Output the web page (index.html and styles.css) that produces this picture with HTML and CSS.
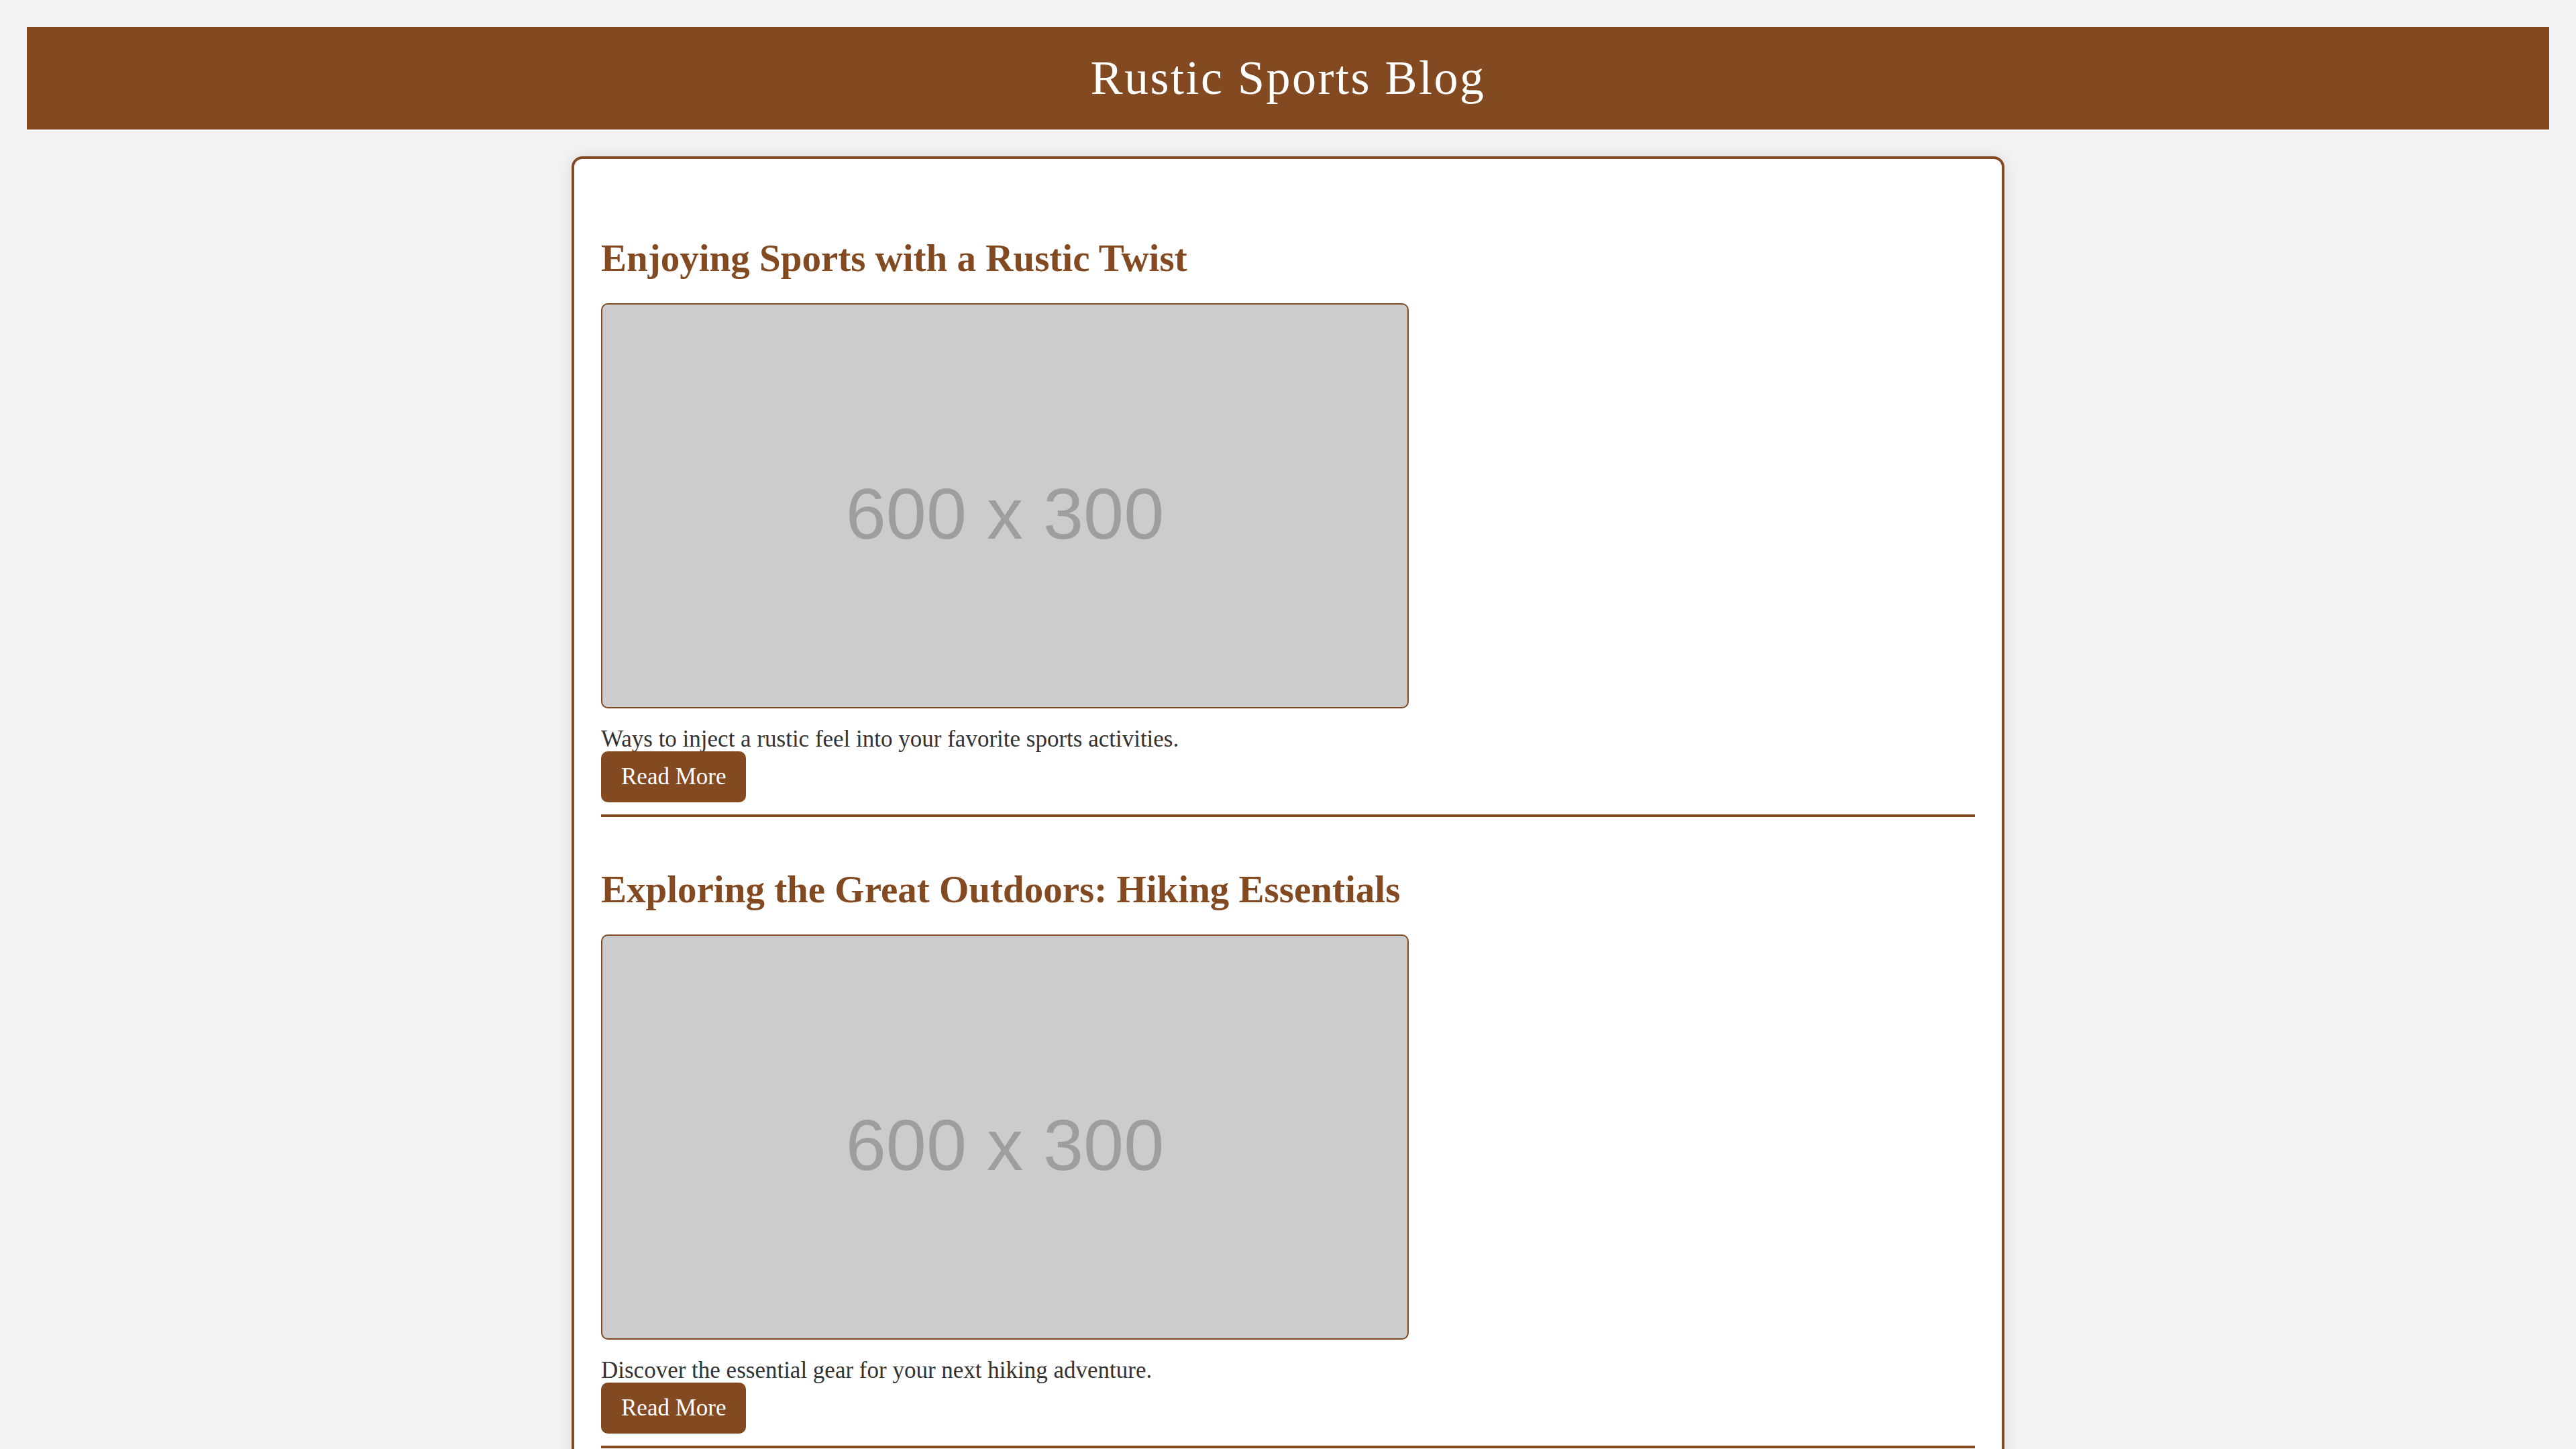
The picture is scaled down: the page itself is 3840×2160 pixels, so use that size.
FILE: index.html
```html
<!DOCTYPE html>
<html lang="en">
<head>
    <meta charset="UTF-8">
    <title>Rustic Sports Blog</title>
    <link rel="stylesheet" href="styles.css">
</head>
<body>
    <header class="site-header">
        <h1>Rustic Sports Blog</h1>
    </header>
    <main class="posts">
        <article class="post">
            <h2>Enjoying Sports with a Rustic Twist</h2>
            <div class="thumb">600 x 300</div>
            <p>Ways to inject a rustic feel into your favorite sports activities.</p>
            <a href="#" class="read-more">Read More</a>
        </article>
        <article class="post">
            <h2>Exploring the Great Outdoors: Hiking Essentials</h2>
            <div class="thumb">600 x 300</div>
            <p>Discover the essential gear for your next hiking adventure.</p>
            <a href="#" class="read-more">Read More</a>
        </article>
        <article class="post">
            <h2>Old School Training: Back to Basics</h2>
            <div class="thumb">600 x 300</div>
            <p>Simple workouts that need nothing more than a field and some grit.</p>
            <a href="#" class="read-more">Read More</a>
        </article>
    </main>
</body>
</html>
```

FILE: styles.css
```css
* {
    box-sizing: border-box;
}
body {
    margin: 0;
    padding: 40px;
    background: #f2f2f2;
    font-family: "Liberation Serif", "DejaVu Serif", serif;
    color: #333;
}
.site-header {
    background: #834921;
    color: #fff;
    text-align: center;
    padding: 40px;
}
.site-header h1 {
    margin: 0;
    font-size: 72px;
    line-height: 73px;
    font-weight: normal;
    letter-spacing: 2.5px;
}
.posts {
    width: 2136px;
    margin: 40px auto 0;
    padding: 40px;
    background: #fff;
    border: 4px solid #834921;
    border-radius: 16px;
    box-shadow: 0 0 20px rgba(0, 0, 0, 0.1);
}
.post {
    padding: 40px 0 18px;
    border-bottom: 4px solid #834921;
}
.post h2 {
    margin: 40px 0 40px;
    font-size: 57px;
    line-height: 55px;
    color: #834921;
}
.thumb {
    width: 1204px;
    height: 604px;
    display: flex;
    align-items: center;
    justify-content: center;
    padding-top: 22px;
    background: #ccc;
    border: 2px solid #834921;
    border-radius: 10px;
    font-family: "Liberation Sans", Arial, sans-serif;
    font-size: 108px;
    color: #9e9e9e;
}
.post p {
    margin: 28px 0 0;
    font-size: 35px;
    line-height: 36px;
}
.read-more {
    display: inline-block;
    padding: 20px 30px;
    background: #834921;
    color: #fff;
    font-size: 35px;
    line-height: 36px;
    text-decoration: none;
    border-radius: 10px;
}
```
